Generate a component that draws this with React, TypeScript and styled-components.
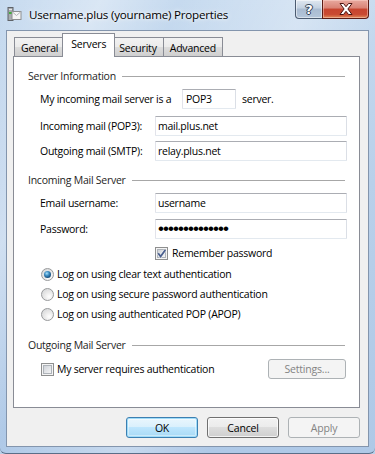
import React from "react";
import styled, { createGlobalStyle, css } from "styled-components";

const Global = createGlobalStyle`
  html, body { margin: 0; padding: 0; background: #b9d1ea; }
  body { font-family: "Open Sans", "Liberation Sans", sans-serif; }
  #root { width: 375px; height: 454px; }
`;

const FONT = `"Open Sans", "Liberation Sans", sans-serif`;

const Window = styled.div`
  width: 375px;
  height: 454px;
  box-sizing: border-box;
  display: flex;
  flex-direction: column;
  padding: 0 6px 6px 6px;
  background:
    linear-gradient(112deg, rgba(255,255,255,0) 0%, rgba(255,255,255,0.35) 18%, rgba(255,255,255,0) 32%, rgba(255,255,255,0.3) 55%, rgba(255,255,255,0) 70%),
    linear-gradient(180deg, #c6daef 0%, #b9d0ea 40%, #afc9e7 100%);
  border-bottom: 1px solid #5a6e88;
  border-radius: 0 0 6px 6px;
`;

const TitleBar = styled.div`
  height: 30px;
  flex: none;
  display: flex;
  align-items: flex-start;
`;

const TitleLeft = styled.div`
  display: flex;
  align-items: center;
  gap: 7px;
  height: 16px;
  margin-top: 6px;
`;

const TitleText = styled.span`
  font-family: ${FONT};
  font-size: 11.6px;
  letter-spacing: -0.2px;
  color: #000;
  text-shadow: 0 0 6px rgba(255,255,255,0.9), 0 0 3px rgba(255,255,255,0.9);
  white-space: nowrap;
`;

const CaptionButtons = styled.div`
  margin-left: auto;
  display: flex;
`;

const CaptionButton = styled.div<{ $close?: boolean }>`
  height: 19px;
  box-sizing: border-box;
  display: flex;
  align-items: center;
  justify-content: center;
  border: 1px solid #4b5b70;
  border-top: none;
  ${(p) =>
    p.$close
      ? css`
          width: 47px;
          border-color: #5b1b14;
          border-radius: 0 0 4px 0;
          background: linear-gradient(180deg, #e8a99f 0%, #d98274 45%, #c7442f 50%, #c94a32 80%, #e08a58 100%);
          box-shadow: inset 0 0 0 1px rgba(255, 220, 210, 0.45);
        `
      : css`
          width: 28px;
          margin-right: -1px;
          border-radius: 0 0 0 4px;
          background: linear-gradient(180deg, #dfe7f0 0%, #c3d1e1 45%, #a9bbd1 50%, #b4c6da 100%);
          box-shadow: inset 0 0 0 1px rgba(255, 255, 255, 0.5);
        `}
`;

const HelpGlyph = styled.span`
  font-family: "DejaVu Sans", sans-serif;
  font-weight: bold;
  font-size: 13px;
  line-height: 1;
  color: #fff;
  text-shadow: 0 0 1px #233247, 1px 0 0 #37475e, -1px 0 0 #37475e, 0 1px 0 #37475e, 0 -1px 0 #37475e;
`;

const Client = styled.div`
  flex: 1;
  display: flex;
  flex-direction: column;
  box-sizing: border-box;
  border: 1px solid #8395ad;
  background: #f0f0f0;
  padding: 2px 8px 8px 6px;
`;

const TabStrip = styled.div`
  display: flex;
  align-items: flex-end;
  height: 24px;
  margin-bottom: -1px;
  padding-left: 2px;
  position: relative;
  z-index: 2;
`;

const Tab = styled.div<{ $active?: boolean }>`
  box-sizing: border-box;
  height: 19px;
  margin-bottom: 1px;
  margin-left: -1px;
  padding: 1px 6px 0 6px;
  display: flex;
  align-items: center;
  border: 1px solid #898c95;
  border-bottom: none;
  background: linear-gradient(180deg, #f2f2f2 0%, #ebebeb 50%, #dddddd 50%, #cfcfcf 100%);
  font-family: ${FONT};
  font-size: 10.5px;
  letter-spacing: -0.2px;
  color: #000;
  white-space: nowrap;
  ${(p) =>
    p.$active &&
    css`
      height: 24px;
      margin: 0 -2px 0 -3px;
      padding: 0 8px 3px 8px;
      background: #fff;
      position: relative;
      z-index: 3;
    `}
`;

const Panel = styled.div`
  flex: 1;
  box-sizing: border-box;
  border: 1px solid #898c95;
  background: #fff;
  padding: 11px 11px 0 14px;
  display: flex;
  flex-direction: column;
  font-family: ${FONT};
  font-size: 10.5px;
  letter-spacing: -0.25px;
  color: #000;
`;

const GroupHeader = styled.div<{ $mt: number }>`
  display: flex;
  align-items: center;
  height: 16px;
  gap: 6px;
  margin-top: ${(p) => p.$mt}px;
  color: #1e1e1e;
  white-space: nowrap;
  &::after {
    content: "";
    flex: 1;
    height: 0;
    border-top: 1px solid #a7a7a7;
    margin-right: 3px;
  }
`;

const Row = styled.div<{ $mt: number }>`
  display: flex;
  align-items: center;
  height: 20px;
  margin-top: ${(p) => p.$mt}px;
  padding-left: 12px;
  white-space: nowrap;
`;

const Label = styled.span<{ $w?: number }>`
  width: ${(p) => p.$w ?? 115}px;
  flex: none;
`;

const TextBox = styled.input<{ $w?: number; $dots?: boolean; $pad?: number }>`
  box-sizing: border-box;
  width: ${(p) => p.$w ?? 192}px;
  height: 20px;
  margin: 0;
  padding: 0 0 0 ${(p) => p.$pad ?? 2}px;
  border: 1px solid;
  border-color: #abadb3 #dbdfe6 #e3e9ef #e2e3ea;
  border-radius: 1px;
  background: #fff;
  font-family: ${FONT};
  font-size: 10.5px;
  letter-spacing: -0.25px;
  color: #000;
  outline: none;
  ${(p) =>
    p.$dots &&
    css`
      font-family: "Liberation Sans", sans-serif;
      font-size: 17px;
      letter-spacing: -0.95px;
    `}
`;

const Suffix = styled.span`
  margin-left: 6px;
`;

const CheckRow = styled.label<{ $mt: number; $indent: number; $gap?: number }>`
  display: flex;
  align-items: center;
  height: 16px;
  margin-top: ${(p) => p.$mt}px;
  padding-left: ${(p) => p.$indent}px;
  gap: ${(p) => p.$gap ?? 3}px;
  white-space: nowrap;
`;

const Box = styled.span`
  position: relative;
  width: 13px;
  height: 13px;
  flex: none;
  box-sizing: border-box;
  border: 1px solid #8e8f8f;
  background: #f4f4f4;
  padding: 1px;
  display: block;
  &::before {
    content: "";
    display: block;
    width: 9px;
    height: 9px;
    background: linear-gradient(135deg, #c9cdd3 0%, #e4e6e9 55%, #f8f8f8 100%);
    box-sizing: border-box;
    box-shadow: inset 0 0 0 1px #aeb3b9;
  }
  svg {
    position: absolute;
    left: -1px;
    top: -1px;
  }
`;

const Radio = styled.span<{ $on?: boolean }>`
  width: 13px;
  height: 13px;
  flex: none;
  box-sizing: border-box;
  border-radius: 50%;
  border: 1px solid #989a9c;
  background: radial-gradient(circle at 65% 70%, #ffffff 0%, #e9e9e9 45%, #cfd1d3 100%);
  display: flex;
  align-items: center;
  justify-content: center;
  &::after {
    content: "";
    display: ${(p) => (p.$on ? "block" : "none")};
    width: 7px;
    height: 7px;
    border-radius: 50%;
    background: radial-gradient(circle at 40% 35%, #a9e1fb 0%, #3f8fc4 35%, #17507f 70%, #0e3457 100%);
  }
`;

const SettingsRow = styled.div<{ $mt: number }>`
  display: flex;
  align-items: center;
  justify-content: space-between;
  height: 20px;
  margin-top: ${(p) => p.$mt}px;
  padding-right: 2px;
`;

const ButtonRow = styled.div`
  display: flex;
  justify-content: flex-end;
  gap: 9px;
  margin-top: 9px;
`;

const Button = styled.button<{ $kind?: "default" | "normal" | "disabled"; $w?: number; $h?: number }>`
  box-sizing: border-box;
  width: ${(p) => p.$w ?? 72}px;
  height: ${(p) => p.$h ?? 21}px;
  margin: 0;
  padding: 0;
  border-radius: 3px;
  font-family: ${FONT};
  font-size: 10.5px;
  letter-spacing: -0.2px;
  color: #000;
  border: 1px solid #707070;
  background: linear-gradient(180deg, #f2f2f2 0%, #ebebeb 50%, #dddddd 50%, #cfcfcf 100%);
  box-shadow: inset 0 0 0 1px rgba(255, 255, 255, 0.75);
  ${(p) =>
    p.$kind === "default" &&
    css`
      border-color: #3c7fb1;
      background: linear-gradient(180deg, #eaf6fd 0%, #d9f0fc 50%, #bee6fd 50%, #a7d9f5 100%);
      box-shadow: inset 0 0 0 1px #9fdcf9, inset 0 0 0 2px rgba(255, 255, 255, 0.4);
    `}
  ${(p) =>
    p.$kind === "disabled" &&
    css`
      border-color: #adb2b5;
      background: #f4f4f4;
      color: #838383;
      box-shadow: none;
    `}
`;

const Check = ({ checked }: { checked?: boolean }) => (
  <Box>
    {checked && (
      <svg width="13" height="13" viewBox="0 0 13 13">
        <path d="M3.2 6.3 L5.6 9.5 L10.3 3" fill="none" stroke="#fff" strokeWidth="3" strokeLinejoin="round" opacity="0.6" />
        <path d="M3.2 6.3 L5.6 9.5 L10.3 3" fill="none" stroke="#4a5f8e" strokeWidth="1.9" strokeLinejoin="miter" />
      </svg>
    )}
  </Box>
);

const AppIcon = () => (
  <svg width="16" height="16" viewBox="0 0 16 16">
    <rect x="2" y="1.5" width="5" height="13" fill="#a9acb0" stroke="#5f6368" strokeWidth="1" />
    <rect x="3" y="3" width="3" height="1" fill="#e6e6e6" />
    <rect x="3" y="6" width="3" height="2" fill="#3fae3c" />
    <rect x="6" y="5.5" width="9" height="8" fill="#f5f5f5" stroke="#8d8f92" strokeWidth="1" />
    <path d="M6.5 6 L10.5 9.5 L14.5 6" fill="none" stroke="#b0b3b7" strokeWidth="1" />
  </svg>
);

const CloseIcon = () => (
  <svg width="14" height="12" viewBox="0 0 14 12">
    <path
      d="M1 0.5 H4.5 L7 3.7 L9.5 0.5 H13 L8.9 6 L13 11.5 H9.5 L7 8.3 L4.5 11.5 H1 L5.1 6 Z"
      fill="#fff"
      stroke="#4a1410"
      strokeWidth="1"
      strokeLinejoin="round"
    />
  </svg>
);

export default function App() {
  return (
    <>
      <Global />
      <Window>
        <TitleBar>
          <TitleLeft>
            <AppIcon />
            <TitleText>Username.plus (yourname) Properties</TitleText>
          </TitleLeft>
          <CaptionButtons>
            <CaptionButton>
              <HelpGlyph>?</HelpGlyph>
            </CaptionButton>
            <CaptionButton $close>
              <CloseIcon />
            </CaptionButton>
          </CaptionButtons>
        </TitleBar>
        <Client>
          <TabStrip>
            <Tab>General</Tab>
            <Tab $active>Servers</Tab>
            <Tab>Security</Tab>
            <Tab>Advanced</Tab>
          </TabStrip>
          <Panel>
            <GroupHeader $mt={0}>Server Information</GroupHeader>
            <Row $mt={5}>
              <Label $w={142}>My incoming mail server is a</Label>
              <TextBox $w={54} $pad={3} readOnly value="POP3" />
              <Suffix>server.</Suffix>
            </Row>
            <Row $mt={7}>
              <Label>Incoming mail (POP3):</Label>
              <TextBox readOnly value="mail.plus.net" />
            </Row>
            <Row $mt={5}>
              <Label>Outgoing mail (SMTP):</Label>
              <TextBox readOnly value="relay.plus.net" />
            </Row>

            <GroupHeader $mt={11}>Incoming Mail Server</GroupHeader>
            <Row $mt={5}>
              <Label>Email username:</Label>
              <TextBox readOnly value="username" />
            </Row>
            <Row $mt={6}>
              <Label>Password:</Label>
              <TextBox $dots $pad={2} type="text" readOnly value={"\u2022".repeat(14)} />
            </Row>
            <CheckRow $mt={6} $indent={127} $gap={4}>
              <Check checked />
              <span>Remember password</span>
            </CheckRow>
            <CheckRow $mt={5} $indent={13}>
              <Radio $on />
              <span>Log on using clear text authentication</span>
            </CheckRow>
            <CheckRow $mt={4} $indent={13}>
              <Radio />
              <span>Log on using secure password authentication</span>
            </CheckRow>
            <CheckRow $mt={4} $indent={13}>
              <Radio />
              <span>Log on using authenticated POP (APOP)</span>
            </CheckRow>

            <GroupHeader $mt={15}>Outgoing Mail Server</GroupHeader>
            <SettingsRow $mt={6}>
              <CheckRow $mt={0} $indent={13}>
                <Check />
                <span>My server requires authentication</span>
              </CheckRow>
              <Button $kind="disabled" $w={78} $h={20}>
                Settings...
              </Button>
            </SettingsRow>
          </Panel>
          <ButtonRow>
            <Button $kind="default">OK</Button>
            <Button>Cancel</Button>
            <Button $kind="disabled">Apply</Button>
          </ButtonRow>
        </Client>
      </Window>
    </>
  );
}
